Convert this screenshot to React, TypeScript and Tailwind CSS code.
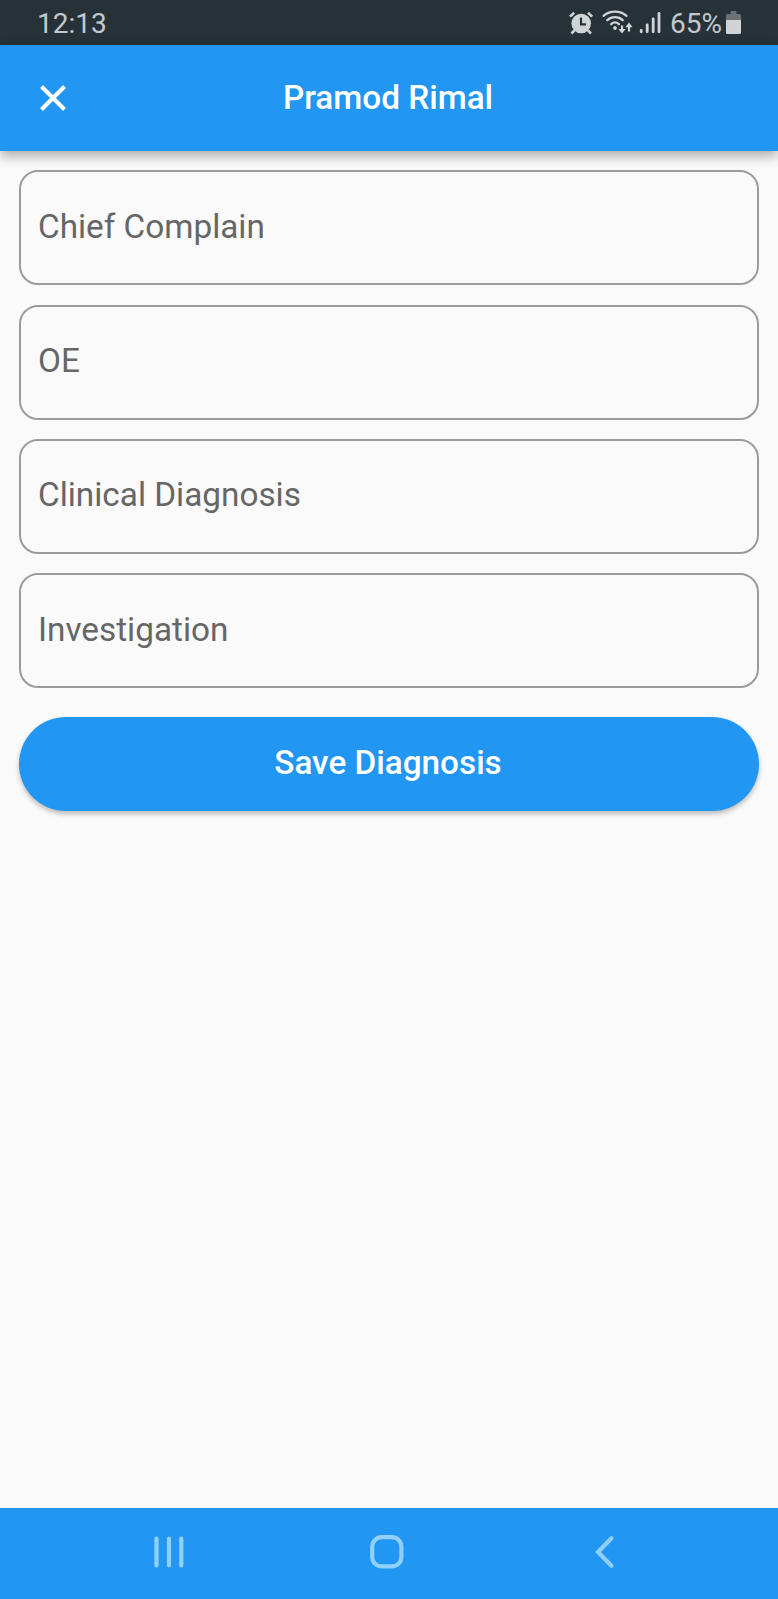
const fields = ["Chief Complain", "OE", "Clinical Diagnosis", "Investigation"];

const AlarmIcon = () => {
  return (
    <svg width="26" height="26" viewBox="0 0 26 26" fill="none">
      <circle cx="13.200" cy="13.500" r="9.800" fill="#d0d4d7" />
      <path
        d="M2 6.600 6.200 2.800M20 2.800l4.200 3.800"
        stroke="#d0d4d7"
        strokeWidth="2.600"
      />
      <path d="m6.400 20.500-3 3M20 20.500l3 3" stroke="#d0d4d7" strokeWidth="2.600" />
      <path d="M13 7.500v6.800h5" stroke="#263238" strokeWidth="2.200" />
    </svg>
  );
};

const WifiIcon = () => {
  return (
    <svg width="32" height="26" viewBox="0 0 32 26" fill="none">
      <g stroke="#d0d4d7" strokeWidth="2.300" strokeLinecap="round">
        <path d="M1.500 5.800c6.400-5.600 16.600-5.600 23 0" />
        <path d="M5.300 10.200c4.400-4 11-4 15.400 0" />
        <path d="M9.100 14.200c2.400-2.200 5.400-2.200 7.800 0" />
      </g>
      <circle cx="13" cy="18" r="1.900" fill="#d0d4d7" />
      <path
        d="M20 15.500v5M27 21.500v-5.500"
        stroke="#d0d4d7"
        strokeWidth="2.200"
      />
      <path d="M16.400 19h7.200L20 23.600zM23.400 17.200h7.200L27 12.600z" fill="#d0d4d7" />
    </svg>
  );
};

const SignalIcon = () => {
  return (
    <svg width="22" height="26" viewBox="0 0 22 26">
      <g stroke="#d0d4d7" strokeWidth="2.800" strokeLinecap="round">
        <path d="M2.200 20.500v1.300M8.200 14.800v7M14.200 9v12.800" />
        <path d="M20 3.300v18.500" />
      </g>
    </svg>
  );
};

const BatteryIcon = () => {
  return (
    <svg width="16" height="26" viewBox="0 0 16 26">
      <path d="M4.700 1h5.800v3H14l1 1v5H0V5l1-1h3.700z" fill="#6b7276" />
      <path
        d="M0 10h15v12.500a1.500 1.500 0 0 1-1.500 1.500h-12A1.500 1.500 0 0 1 0 22.500z"
        fill="#d0d4d7"
      />
    </svg>
  );
};

const StatusBar = () => {
  return (
    <div className="flex h-[45px] items-center justify-between bg-[#263238] pr-[36px] pl-[37px] text-[28px] leading-none text-[#c3c8cc]">
      <span className="pt-[2px]">12:13</span>
      <div className="flex items-center">
        <AlarmIcon />
        <div className="ml-[8px]">
          <WifiIcon />
        </div>
        <div className="ml-[5px]">
          <SignalIcon />
        </div>
        <span className="ml-[9px] pt-[2px]">65%</span>
        <div className="ml-[4px]">
          <BatteryIcon />
        </div>
      </div>
    </div>
  );
};

const AppBar = () => {
  return (
    <header className="grid h-[106px] grid-cols-[105px_1fr_107px] items-center bg-[#2196f3] text-white shadow-[0_5px_12px_rgba(0,0,0,0.32)]">
      <button aria-label="Close" className="ml-[40px]">
        <svg width="26" height="26" viewBox="0 0 26 26">
          <path d="m1.500 1.500 23 23m0-23-23 23" stroke="#fff" strokeWidth="4" />
        </svg>
      </button>
      <h1 className="text-center text-[33.300px] font-medium">Pramod Rimal</h1>
    </header>
  );
};

const NavBar = () => {
  return (
    <nav className="flex h-[91px] items-center bg-[#2196f3] pb-[4px] pl-[153px]">
      <svg width="32" height="34" viewBox="0 0 32 34">
        <path
          d="M3.500 3.500v27M16 3.500v27M28.300 3.500v27"
          stroke="#90d0fb"
          strokeWidth="4.200"
          strokeLinecap="round"
        />
      </svg>
      <svg className="ml-[185px]" width="34" height="34" viewBox="0 0 34 34">
        <rect
          x="2.200"
          y="2.200"
          width="29.200"
          height="29.200"
          rx="9.500"
          fill="none"
          stroke="#90d0fb"
          strokeWidth="4.200"
        />
      </svg>
      <svg className="ml-[190px]" width="20" height="34" viewBox="0 0 20 34">
        <path
          d="M17.400 3.200 4 17l13.400 13.800"
          fill="none"
          stroke="#90d0fb"
          strokeWidth="4.200"
          strokeLinecap="round"
        />
      </svg>
    </nav>
  );
};

const App = () => {
  return (
    <div className="flex h-[1599px] w-[778px] flex-col bg-[#fafafa] font-['Roboto',sans-serif]">
      <StatusBar />
      <AppBar />
      <main className="flex flex-1 flex-col px-[19px] pt-[19.300px]">
        <div className="flex flex-col gap-[19.300px]">
          {fields.map((label) => (
            <div
              key={label}
              className="flex h-[115px] items-center rounded-[19px] border-2 border-[#9b9b9b] px-[17px] pb-[2.400px] text-[33.300px] text-[#666]">
              {label}
            </div>
          ))}
        </div>
        <button className="mt-[28.500px] h-[94.500px] rounded-full bg-[#2196f3] pr-[2px] pb-[1px] text-[33.300px] font-medium text-white shadow-[0_3px_5px_rgba(0,0,0,0.25)]">
          Save Diagnosis
        </button>
      </main>
      <NavBar />
    </div>
  );
};
export default App;
